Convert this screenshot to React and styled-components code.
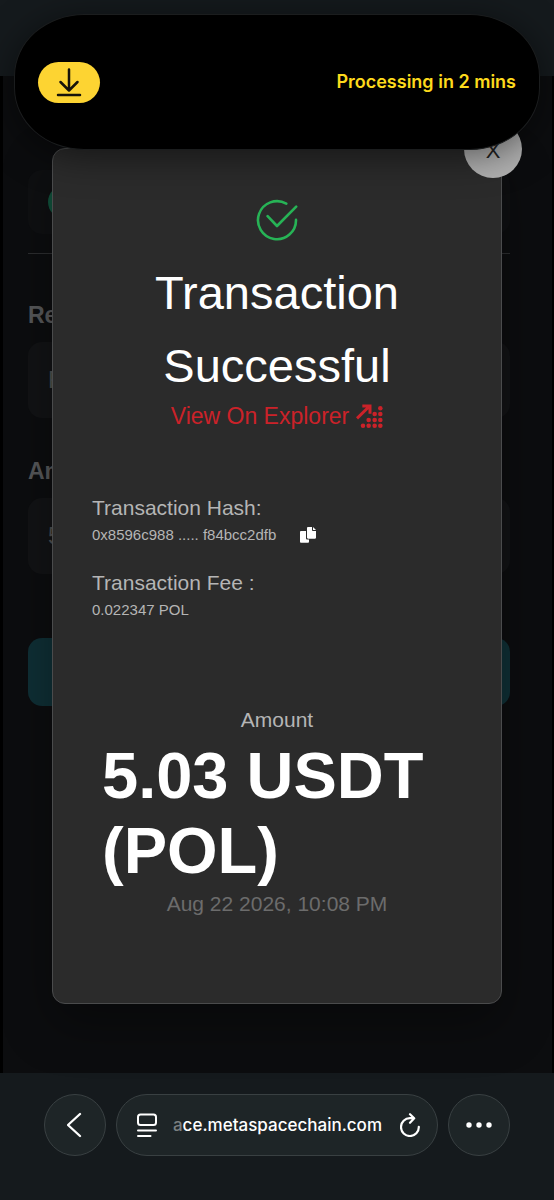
import React from "react";
import styled, { createGlobalStyle } from "styled-components";

const GlobalStyle = createGlobalStyle`
  *, *::before, *::after { box-sizing: border-box; }
  body { margin: 0; background: #000; }
  button, input { font: inherit; color: inherit; }
  h1, h2, p, dl, dd { margin: 0; }
`;

const helvetica = `"Liberation Sans", Helvetica, Arial, sans-serif`;
const system = `Inter, "Liberation Sans", sans-serif`;

const Screen = styled.div`
  position: relative;
  display: grid;
  grid-template-rows: auto 1fr auto;
  min-height: 100vh;
  overflow: hidden;
  font-family: ${helvetica};
  color: #fff;
`;

const StatusArea = styled.div`
  height: 76px;
  background: #151a1d;
`;

const Content = styled.main`
  display: grid;
  border: solid #000;
  border-width: 0 2px 0 3px;
  background: #0c0d0f;
`;

const Form = styled.form`
  grid-area: 1 / 1;
  display: flex;
  flex-direction: column;
  padding: 94px 42px 0 25px;
`;

const TokenRow = styled.div`
  display: flex;
  align-items: center;
  height: 64px;
  padding-left: 20px;
  border-radius: 14px;
  background: #0f1012;
`;

const TokenDot = styled.span`
  width: 34px;
  height: 34px;
  border-radius: 50%;
  background: #11523c;
`;

const Divider = styled.hr`
  width: 100%;
  height: 1px;
  margin: 19px 0 46px;
  border: 0;
  background: #2c2d2f;
`;

const FieldLabel = styled.label`
  margin-bottom: 12px;
  font-size: 23px;
  font-weight: 700;
  line-height: 30px;
  color: #565759;
`;

const Field = styled.input`
  width: 100%;
  height: 76px;
  margin-bottom: 38px;
  padding: 0 20px;
  border: 0;
  border-radius: 14px;
  background: #121315;
  font-size: 23px;
  color: #4e4f51;
`;

const Submit = styled.button`
  height: 68px;
  margin-top: 26px;
  border: 0;
  border-radius: 14px;
  background: #0f2f35;
  color: #4e4f51;
`;

const Overlay = styled.div`
  grid-area: 1 / 1;
  z-index: 1;
  display: grid;
  align-items: start;
  padding: 72px 50px 69px 49px;
`;

const Dialog = styled.section`
  position: relative;
  display: flex;
  flex-direction: column;
  align-items: center;
  padding: 50px 39px 85px;
  border: 1px solid #4a4b4c;
  border-radius: 13px;
  background: #2b2b2b;
  box-shadow: 0 20px 50px rgba(0, 0, 0, 0.35);
`;

const Close = styled.button`
  position: absolute;
  top: -29px;
  right: -21px;
  width: 58px;
  height: 58px;
  padding: 4px 0 0;
  border: 0;
  border-radius: 50%;
  background: #b0b0b0;
  font-size: 22px;
  color: #222;
`;

const Title = styled.h1`
  margin-top: 15px;
  font-size: 47px;
  font-weight: 400;
  line-height: 73px;
  text-align: center;
`;

const ExplorerLink = styled.a`
  display: flex;
  align-items: center;
  gap: 7px;
  font-size: 23px;
  line-height: 28px;
  color: #cb2229;
  text-decoration: none;
`;

const Details = styled.dl`
  align-self: stretch;
  display: grid;
  gap: 21px;
  margin-top: 64px;
  color: #b5b5b5;
`;

const Term = styled.dt`
  font-size: 21px;
  line-height: 28px;
`;

const Value = styled.dd`
  display: flex;
  align-items: center;
  gap: 24px;
  font-size: 15px;
  line-height: 26px;
`;

const IconButton = styled.button`
  display: flex;
  padding: 0;
  border: 0;
  background: none;
  color: #fff;
`;

const AmountLabel = styled.p`
  margin-top: 83px;
  font-size: 21px;
  line-height: 28px;
  color: #b5b5b5;
`;

const Amount = styled.p`
  align-self: stretch;
  margin-top: 4px;
  padding: 0 10px;
  font-size: 65px;
  font-weight: 700;
  line-height: 75px;
`;

const Timestamp = styled.time`
  margin-top: 2px;
  font-size: 21px;
  line-height: 28px;
  color: #6c6c6c;
`;

const Island = styled.aside`
  position: absolute;
  z-index: 2;
  top: 14px;
  left: 14px;
  right: 14px;
  display: flex;
  align-items: center;
  justify-content: space-between;
  height: 136px;
  padding: 0 23px;
  border: 1px solid #1b1d1e;
  border-radius: 70px / 62px;
  background: #000;
  box-shadow: 0 6px 36px rgba(0, 0, 0, 0.5);
`;

const DownloadBadge = styled.span`
  display: flex;
  align-items: center;
  justify-content: center;
  width: 62px;
  height: 41px;
  border-radius: 21px;
  background: #fdd432;
`;

const IslandText = styled.span`
  font-family: ${system};
  font-size: 18px;
  font-weight: 600;
  line-height: 24px;
  color: #fdda1c;
`;

const Toolbar = styled.nav`
  display: flex;
  gap: 10px;
  padding: 21px 44px 44px;
  background: #151a1d;
`;

const RoundButton = styled.button`
  display: flex;
  flex: none;
  align-items: center;
  justify-content: center;
  width: 62px;
  height: 62px;
  padding: 0;
  border: 1px solid #394042;
  border-radius: 50%;
  background: #1e2527;
`;

const AddressBar = styled.div`
  display: flex;
  flex: 1;
  align-items: center;
  justify-content: space-between;
  min-width: 0;
  height: 62px;
  padding: 0 17px 0 20px;
  border: 1px solid #394042;
  border-radius: 31px;
  background: #1e2527;
`;

const Address = styled.span`
  flex: 1;
  overflow: hidden;
  padding-right: 18px;
  font-family: ${system};
  font-size: 17px;
  font-weight: 500;
  line-height: 24px;
  text-align: right;
  white-space: nowrap;
`;

const FadedLetter = styled.span`
  color: #7b8082;
`;

const SuccessIcon = () => (
  <svg width="42" height="42" viewBox="0 0 42 42" fill="none" stroke="#27b356" strokeWidth="2.6" strokeLinecap="round" strokeLinejoin="round" aria-hidden="true">
    <path d="M30.3 4.6A19 19 0 1 0 40 20.9" />
    <path d="M11.6 17.2L21 27L40.2 7.6" />
  </svg>
);

const dots = [[92, 82], [75, 99], [92, 99], [57, 117], [75, 117], [92, 117], [40, 134], [57, 134], [75, 134], [92, 134]];

const ExplorerIcon = () => (
  <svg width="27" height="24" viewBox="19 69 81 72" aria-hidden="true">
    <path d="M22 112L60 75M38 75H61V98" fill="none" stroke="currentColor" strokeWidth="9" />
    {dots.map(([x, y]) => <circle key={`${x}-${y}`} cx={x} cy={y} r="6.8" fill="currentColor" />)}
  </svg>
);

const CopyIcon = () => (
  <svg width="16" height="16" viewBox="0 0 16 16" fill="currentColor" aria-hidden="true">
    <path d="M1.3 4H6v7.2c0 .9.5 1.4 1.4 1.4H9v1.9c0 .9-.4 1.3-1.3 1.3H1.3C.4 15.8 0 15.4 0 14.5V5.3C0 4.4.4 4 1.3 4z" />
    <path d="M8.2 0H12v2.800c0 .8.4 1.200 1.200 1.200H16v6.500c0 .8-.4 1.200-1.200 1.200H8.200C7.400 11.700 7 11.300 7 10.500V1.200C7 .4 7.400 0 8.200 0zM13 0l3 3h-3z" />
  </svg>
);

const DownloadIcon = () => (
  <svg width="26" height="30" viewBox="0 0 26 30" fill="none" stroke="#16130a" strokeWidth="2.5" strokeLinecap="round" strokeLinejoin="round" aria-hidden="true">
    <path d="M13 2.5V23M4.500 15L13 23.500L21.500 15M2 28H24" />
  </svg>
);

const BackIcon = () => (
  <svg width="16" height="26" viewBox="0 0 16 26" fill="none" stroke="#fff" strokeWidth="2.3" strokeLinecap="round" strokeLinejoin="round" aria-hidden="true">
    <path d="M13 2L1 13L13 24" />
  </svg>
);

const PageIcon = () => (
  <svg width="20" height="24" viewBox="0 0 20 24" fill="none" stroke="#fff" strokeWidth="2" strokeLinecap="round" aria-hidden="true">
    <rect x="1" y="1.5" width="18" height="10.5" rx="2.5" />
    <path d="M1 17.500H19M1 23H13.500" />
  </svg>
);

const ReloadIcon = () => (
  <svg width="20" height="24" viewBox="0 0 20 24" fill="none" stroke="#fff" strokeWidth="2.2" strokeLinecap="round" strokeLinejoin="round" aria-hidden="true">
    <path d="M18.800 13.800A8.900 8.900 0 1 1 10 5.200H13.500M10 1.200L14.200 5.300L10 9.800" />
  </svg>
);

const MoreIcon = () => (
  <svg width="26" height="6" viewBox="0 0 26 6" fill="#fff" aria-hidden="true">
    <circle cx="3" cy="3" r="2.700" />
    <circle cx="13" cy="3" r="2.700" />
    <circle cx="23" cy="3" r="2.700" />
  </svg>
);

export default function App() {
  return (
    <>
      <GlobalStyle />
      <Screen>
        <Island>
          <DownloadBadge><DownloadIcon /></DownloadBadge>
          <IslandText>Processing in 2 mins</IslandText>
        </Island>
        <StatusArea />
        <Content>
          <Form>
            <TokenRow><TokenDot /></TokenRow>
            <Divider />
            <FieldLabel htmlFor="receiver">Receiver</FieldLabel>
            <Field id="receiver" defaultValue="Receiver" />
            <FieldLabel htmlFor="amount">Amount</FieldLabel>
            <Field id="amount" defaultValue="5.03" />
            <Submit type="button" aria-label="Send" />
          </Form>
          <Overlay>
            <Dialog role="dialog" aria-labelledby="dialog-title">
              <Close type="button" aria-label="Close">X</Close>
              <SuccessIcon />
              <Title id="dialog-title">Transaction Successful</Title>
              <ExplorerLink href="#explorer">View On Explorer <ExplorerIcon /></ExplorerLink>
              <Details>
                <div>
                  <Term>Transaction Hash:</Term>
                  <Value>
                    0x8596c988 ..... f84bcc2dfb
                    <IconButton type="button" aria-label="Copy hash"><CopyIcon /></IconButton>
                  </Value>
                </div>
                <div>
                  <Term>Transaction Fee :</Term>
                  <Value>0.022347 POL</Value>
                </div>
              </Details>
              <AmountLabel>Amount</AmountLabel>
              <Amount>5.03 USDT (POL)</Amount>
              <Timestamp dateTime="2026-08-22T22:08">Aug 22 2026, 10:08 PM</Timestamp>
            </Dialog>
          </Overlay>
        </Content>
        <Toolbar aria-label="Browser">
          <RoundButton type="button" aria-label="Back"><BackIcon /></RoundButton>
          <AddressBar>
            <IconButton type="button" aria-label="Page menu"><PageIcon /></IconButton>
            <Address><FadedLetter>a</FadedLetter>ce.metaspacechain.com</Address>
            <IconButton type="button" aria-label="Reload"><ReloadIcon /></IconButton>
          </AddressBar>
          <RoundButton type="button" aria-label="More"><MoreIcon /></RoundButton>
        </Toolbar>
      </Screen>
    </>
  );
}
